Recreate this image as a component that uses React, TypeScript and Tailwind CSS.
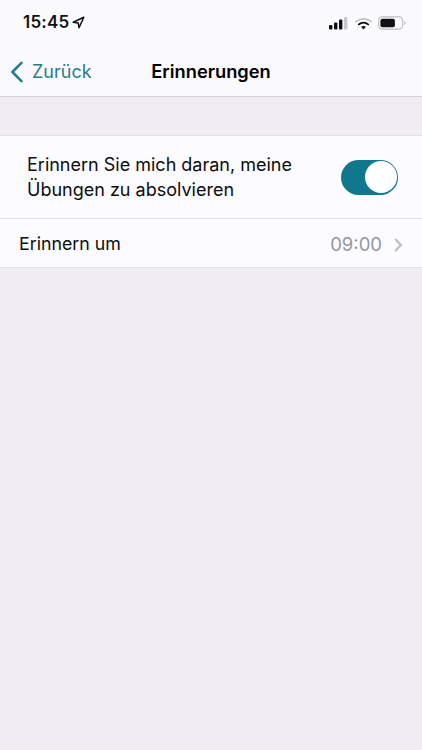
export default function App() {
  const font = { fontFamily: 'Inter, "Liberation Sans", sans-serif' };
  return (
    <div style={font} className="flex h-[750px] w-[422px] flex-col overflow-hidden bg-[#efedf3] text-black">
      <header className="flex h-[97px] flex-col border-b border-[#d3d2d6] bg-[#fbfafe]">
        <div className="flex h-[46px] items-center justify-between pl-[23px] pr-[16px]">
          <div className="flex items-center gap-[3px] text-[17px] font-semibold tracking-[0.2px] text-[#111]">
            <span>15:45</span>
            <svg width="13" height="13" viewBox="0 0 13 13" fill="none" stroke="#111" strokeWidth="1.5" strokeLinejoin="round" className="mt-[-1px]">
              <path d="M11.8 1.2 1.2 6.2 6.2 6.9 7 11.8Z" />
            </svg>
          </div>
          <div className="flex items-center gap-[6px]">
            <svg width="19" height="13" viewBox="0 0 19 13" className="mr-[1px]">
              <rect x="0" y="8" width="3.4" height="4.5" rx="1" fill="#111" />
              <rect x="5" y="5.5" width="3.4" height="7" rx="1" fill="#111" />
              <rect x="10" y="2.5" width="3.4" height="10" rx="1" fill="#111" />
              <rect x="15" y="0" width="3.4" height="12.5" rx="1" fill="#c9c9cc" />
            </svg>
            <svg width="17" height="13" viewBox="0 0 17 13" fill="none">
              <path d="M1 4.6C5.2.9 11.8.9 16 4.6" stroke="#c4c4c8" strokeWidth="1.8" strokeLinecap="round" />
              <path d="M3.8 7.4c2.7-2.3 6.7-2.3 9.4 0" stroke="#111" strokeWidth="1.9" strokeLinecap="round" />
              <path d="M8.5 12.6 6 9.8c1.5-1.1 3.5-1.1 5 0Z" fill="#111" />
            </svg>
            <svg width="28" height="14" viewBox="0 0 28 14" fill="none">
              <rect x="0.6" y="0.9" width="24" height="12.2" rx="3.6" stroke="#bdbdc0" strokeWidth="1.1" />
              <rect x="2.4" y="2.7" width="14.5" height="8.6" rx="2" fill="#111" />
              <path d="M26.2 5v4c.9-.3 1.4-1.1 1.4-2s-.5-1.7-1.4-2Z" fill="#bdbdc0" />
            </svg>
          </div>
        </div>
        <nav className="relative flex h-[50px] items-center pt-[1px]">
          <div className="flex items-center gap-[8px] pl-[10px] text-[#2a7c8b]">
            <svg width="14" height="22" viewBox="0 0 14 22" fill="none" stroke="#267d8d" strokeWidth="2.6" strokeLinecap="round" strokeLinejoin="round">
              <path d="M11.5 1.8 2.4 11l9.1 9.2" />
            </svg>
            <span className="text-[18px] leading-none">Zurück</span>
          </div>
          <h1 className="absolute inset-x-0 text-center text-[18.3px] font-semibold">Erinnerungen</h1>
        </nav>
      </header>
      <section className="mt-[38px] border-y border-[#e2e1e6] bg-[#fcfbff]">
        <div className="flex h-[82px] items-center justify-between pl-[27px] pr-[24px]">
          <p className="text-[18px] leading-[25px] text-[#0d0d0d]">
            Erinnern Sie mich daran, meine
            <br />
            Übungen zu absolvieren
          </p>
          <div className="flex h-[35px] w-[57px] items-center justify-end rounded-full bg-[#0f788c] pr-[1.5px]">
            <div className="h-[32px] w-[32px] rounded-full bg-white" />
          </div>
        </div>
        <div className="flex h-[49px] items-center justify-between border-t border-[#e2e1e6] pl-[19px] pr-[19px] pt-[3px]">
          <span className="text-[17.8px] text-[#0d0d0d]">Erinnern um</span>
          <div className="flex items-center gap-[12px]">
            <span className="text-[18.5px] text-[#97979b]">09:00</span>
            <svg width="9" height="14" viewBox="0 0 9 14" fill="none" stroke="#bcbcc0" strokeWidth="2" strokeLinecap="round" strokeLinejoin="round">
              <path d="M1.6 1.5 7 7l-5.4 5.5" />
            </svg>
          </div>
        </div>
      </section>
    </div>
  );
}
